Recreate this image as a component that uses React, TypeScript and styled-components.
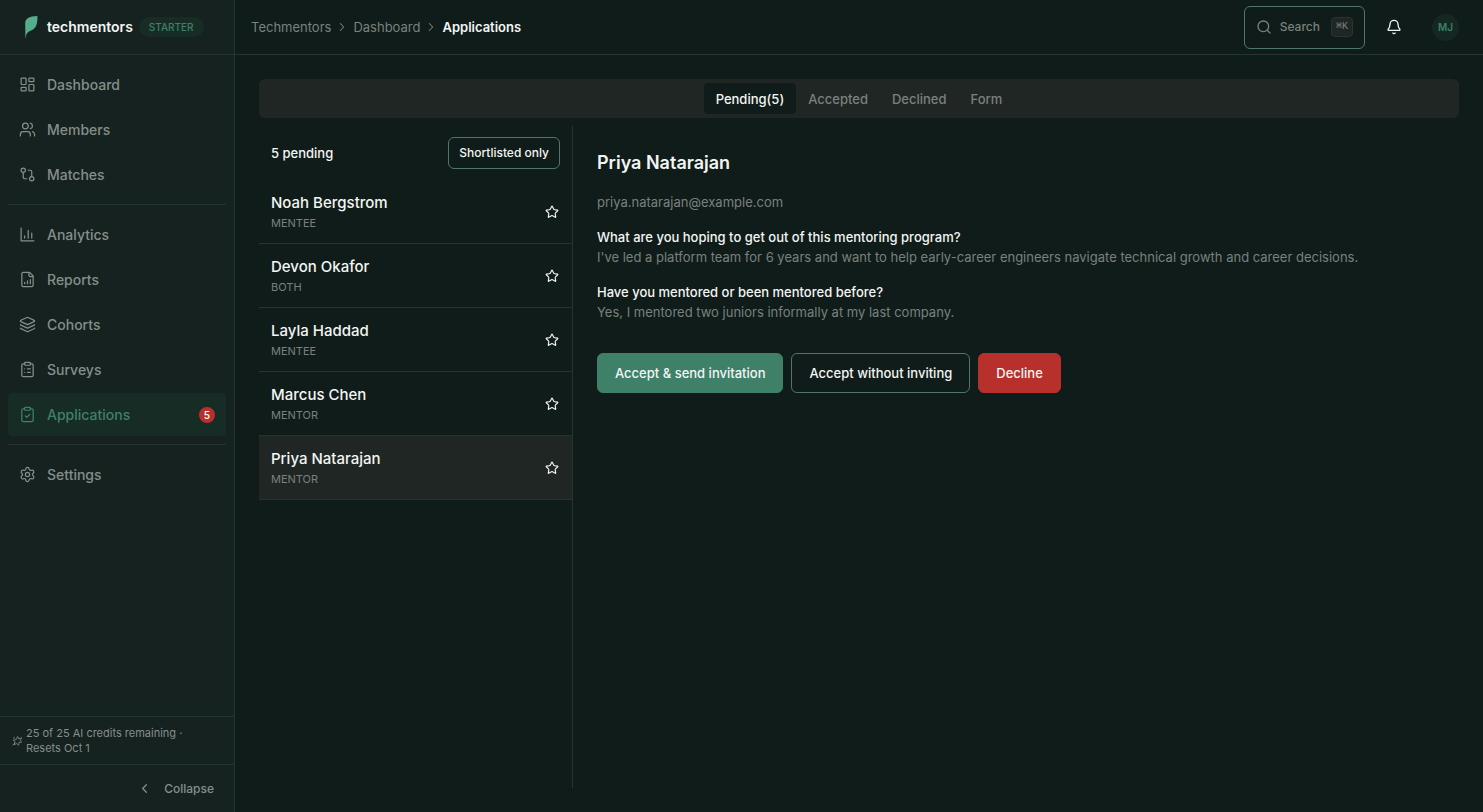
import React, { useState } from "react";
import styled, { createGlobalStyle, css } from "styled-components";
import {
  LayoutDashboard, Users, GitCompare, Layers, ClipboardList,
  ClipboardCheck, Settings, ChevronRight, ChevronLeft, Search, Bell, Star,
} from "lucide-react";

const c = {
  page: "#101c19",
  side: "#15221f",
  line: "#243430",
  text: "#f3f5f4",
  muted: "#868e8b",
  dim: "#79817e",
  green: "#3f8069",
  greenBg: "#172c25",
  outline: "#4f7768",
  panel: "#202624",
  red: "#b8302b",
};

const GlobalStyle = createGlobalStyle`
  * { box-sizing: border-box; }
  body { margin: 0; background: ${c.page}; color: ${c.text}; font-family: Inter, "Liberation Sans", sans-serif; font-size: 13px; line-height: 20px; }
  button { font: inherit; color: inherit; background: none; border: 0; padding: 0; cursor: pointer; }
  a { color: inherit; text-decoration: none; }
  svg { flex-shrink: 0; }
  h1, p, ul, ol, dl, dd { margin: 0; padding: 0; list-style: none; }
`;

const Shell = styled.div`
  display: grid;
  grid-template-columns: 235px minmax(0, 1fr);
  min-height: 100vh;
`;

const Sidebar = styled.aside`
  display: flex;
  flex-direction: column;
  background: ${c.side};
  border-right: 1px solid ${c.line};
`;

const Brand = styled.div`
  display: flex;
  align-items: center;
  height: 55px;
  padding: 0 24px;
  border-bottom: 1px solid ${c.line};
`;

const BrandName = styled.span`
  margin-left: 9px;
  font-size: 14px;
  font-weight: 600;
`;

const Plan = styled.span`
  margin-left: 6px;
  padding: 0 10px;
  border-radius: 10px;
  background: ${c.greenBg};
  color: ${c.green};
  font-size: 10px;
  font-weight: 500;
`;

const Nav = styled.nav`
  flex: 1;
  padding: 8px 8px 0;
`;

const NavGroup = styled.ul`
  display: flex;
  flex-direction: column;
  gap: 2px;
  & + & {
    margin-top: 8px;
    padding-top: 8px;
    border-top: 1px solid ${c.line};
  }
`;

const NavLink = styled.a<{ $active?: boolean }>`
  display: flex;
  align-items: center;
  gap: 11px;
  height: 43px;
  padding: 0 11px;
  border-radius: 4px;
  font-size: 14px;
  font-weight: 500;
  color: ${(p) => (p.$active ? c.green : c.muted)};
  background: ${(p) => (p.$active ? c.greenBg : "transparent")};
`;

const Count = styled.span`
  width: 16px;
  margin-left: auto;
  border-radius: 8px;
  background: ${c.red};
  color: ${c.text};
  font-size: 10px;
  font-weight: 600;
  line-height: 16px;
  text-align: center;
`;

const Credits = styled.p`
  display: flex;
  align-items: center;
  gap: 4px;
  min-height: 48px;
  padding: 0 40px 0 12px;
  border-top: 1px solid ${c.line};
  color: ${c.muted};
  font-size: 11px;
  line-height: 15px;
`;

const Collapse = styled.button`
  display: flex;
  align-items: center;
  justify-content: flex-end;
  gap: 12px;
  height: 48px;
  padding: 0 20px;
  border-top: 1px solid ${c.line};
  color: ${c.muted};
  font-size: 12px;
  font-weight: 500;
`;

const Main = styled.div`
  display: flex;
  flex-direction: column;
`;

const TopBar = styled.header`
  display: flex;
  align-items: center;
  justify-content: space-between;
  height: 55px;
  padding: 0 24px 0 16px;
  border-bottom: 1px solid ${c.line};
`;

const Crumbs = styled.ol`
  display: flex;
  align-items: center;
  color: ${c.dim};
  li { display: flex; align-items: center; }
  svg { margin: 0 4px; }
  [aria-current] { color: ${c.text}; font-weight: 600; }
`;

const Tools = styled.div`
  display: flex;
  align-items: center;
`;

const SearchButton = styled.button`
  display: flex;
  align-items: center;
  height: 43px;
  padding: 0 11px;
  border: 1px solid ${c.outline};
  border-radius: 6px;
  color: ${c.dim};
  font-size: 12px;
  font-weight: 500;
  svg { margin-right: 8px; }
`;

const Key = styled.kbd`
  margin-left: 11px;
  padding: 0 4px;
  border: 1px solid #2b3230;
  border-radius: 4px;
  background: ${c.panel};
  font: 500 10px/18px "Liberation Mono", monospace;
`;

const BellButton = styled.button`
  display: flex;
  margin: 0 30px 0 21px;
`;

const Avatar = styled.button`
  width: 27px;
  height: 27px;
  border-radius: 50%;
  background: #152722;
  color: ${c.green};
  font-size: 10px;
  font-weight: 600;
`;

const Content = styled.main`
  display: flex;
  flex: 1;
  flex-direction: column;
  gap: 8px;
  padding: 24px;
`;

const Tabs = styled.div`
  display: flex;
  justify-content: center;
  height: 39px;
  padding: 4px;
  border-radius: 6px;
  background: ${c.panel};
`;

const Tab = styled.button<{ $active?: boolean }>`
  padding: 0 12px;
  border-radius: 4px;
  font-weight: 500;
  color: ${(p) => (p.$active ? c.text : c.dim)};
  background: ${(p) => (p.$active ? c.page : "transparent")};
`;

const Split = styled.div`
  display: grid;
  flex: 1;
  grid-template-columns: 314px minmax(0, 1fr);
`;

const ListPane = styled.section`
  border-right: 1px solid ${c.line};
`;

const ListHead = styled.div`
  display: flex;
  align-items: center;
  justify-content: space-between;
  height: 54px;
  padding: 0 12px;
  font-weight: 500;
`;

const Button = styled.button<{ $kind?: "primary" | "danger"; $small?: boolean }>`
  height: 40px;
  padding: 0 17px;
  border: 1px solid ${c.outline};
  border-radius: 6px;
  font-weight: 500;
  ${(p) => p.$small && css`height: 32px; padding: 0 10px; font-size: 12px;`}
  ${(p) => p.$kind === "primary" && css`background: ${c.green}; border-color: ${c.green};`}
  ${(p) => p.$kind === "danger" && css`background: ${c.red}; border-color: ${c.red};`}
`;

const Row = styled.li<{ $active?: boolean }>`
  display: flex;
  align-items: center;
  justify-content: space-between;
  height: 64px;
  padding: 0 13px 0 12px;
  border-bottom: 1px solid ${c.line};
  background: ${(p) => (p.$active ? c.panel : "transparent")};
`;

const Person = styled.button`
  display: flex;
  flex: 1;
  flex-direction: column;
  text-align: left;
`;

const PersonName = styled.span`
  font-size: 15px;
  font-weight: 500;
  line-height: 22px;
`;

const Role = styled.span`
  color: ${c.dim};
  font-size: 11px;
  line-height: 18px;
`;

const StarButton = styled.button`
  display: flex;
`;

const Detail = styled.section`
  padding: 24px 0 0 24px;
`;

const Title = styled.h1`
  font-size: 18px;
  font-weight: 600;
  line-height: 26px;
`;

const Email = styled.p`
  margin-top: 16px;
  color: ${c.dim};
`;

const Answers = styled.dl`
  dt { margin-top: 15px; font-weight: 500; }
  dd { color: ${c.dim}; }
`;

const Actions = styled.div`
  display: flex;
  gap: 8px;
  margin-top: 31px;
`;

const Logo = () => (
  <svg width="14" height="24" viewBox="0 0 14 24" aria-hidden="true">
    <path d="M1.400 22.800 1.200 8.800C1.300 3.500 4.800 1.300 13.400 1.100C13.700 8.800 12.200 12.600 8.600 14.700C4.600 16.600 2.200 17.200 1.800 22.800Z" fill="#55ad8e" />
  </svg>
);

const line = { fill: "none", stroke: "currentColor", strokeWidth: 2, strokeLinecap: "round", strokeLinejoin: "round" } as const;

const AnalyticsIcon = () => (
  <svg width="17" height="17" viewBox="0 0 24 24" {...line} strokeWidth={1.75} aria-hidden="true">
    <path d="M3 3v18h18M8 17v-3M13 17V6M18 17v-7" />
  </svg>
);

const ReportsIcon = () => (
  <svg width="17" height="17" viewBox="0 0 24 24" {...line} strokeWidth={1.75} aria-hidden="true">
    <path d="M15 2H6a2 2 0 0 0-2 2v16a2 2 0 0 0 2 2h12a2 2 0 0 0 2-2V7zM14 2v4a2 2 0 0 0 2 2h4M8 18v-2M12 18v-4M16 18v-6" />
  </svg>
);

const SparkIcon = () => (
  <svg width="10" height="10" viewBox="0 0 24 24" {...line} aria-hidden="true">
    <path d="M14 2l2 5 7-3-3 7 3 4-6 0-1 7-5-4-6 3 2-7-4-4 6-1z" />
    <path d="M2 22l5-5M5 3v3" />
  </svg>
);

const groups = [
  [
    { label: "Dashboard", Icon: LayoutDashboard },
    { label: "Members", Icon: Users },
    { label: "Matches", Icon: GitCompare },
  ],
  [
    { label: "Analytics", Icon: AnalyticsIcon },
    { label: "Reports", Icon: ReportsIcon },
    { label: "Cohorts", Icon: Layers },
    { label: "Surveys", Icon: ClipboardList },
    { label: "Applications", Icon: ClipboardCheck, count: 5 },
  ],
  [{ label: "Settings", Icon: Settings }],
] as { label: string; Icon: React.ComponentType<{ size?: number; strokeWidth?: number }>; count?: number }[][];

const people = [
  { name: "Noah Bergstrom", role: "MENTEE" },
  { name: "Devon Okafor", role: "BOTH" },
  { name: "Layla Haddad", role: "MENTEE" },
  { name: "Marcus Chen", role: "MENTOR" },
  { name: "Priya Natarajan", role: "MENTOR" },
];

export default function App() {
  const [tab, setTab] = useState("Pending(5)");
  const [selected, setSelected] = useState(4);
  return (
    <Shell>
      <GlobalStyle />
      <Sidebar>
        <Brand>
          <Logo />
          <BrandName>techmentors</BrandName>
          <Plan>STARTER</Plan>
        </Brand>
        <Nav aria-label="Main">
          {groups.map((items) => (
            <NavGroup key={items[0].label}>
              {items.map(({ label, Icon, count }) => (
                <li key={label}>
                  <NavLink href="#" $active={label === "Applications"}>
                    <Icon size={17} strokeWidth={1.75} />
                    {label}
                    {count && <Count>{count}</Count>}
                  </NavLink>
                </li>
              ))}
            </NavGroup>
          ))}
        </Nav>
        <Credits>
          <SparkIcon />
          <span>25 of 25 AI credits remaining · Resets Oct 1</span>
        </Credits>
        <Collapse><ChevronLeft size={15} />Collapse</Collapse>
      </Sidebar>
      <Main>
        <TopBar>
          <nav aria-label="Breadcrumb">
            <Crumbs>
              <li><a href="#">Techmentors</a><ChevronRight size={14} strokeWidth={1.75} /></li>
              <li><a href="#">Dashboard</a><ChevronRight size={14} strokeWidth={1.75} /></li>
              <li aria-current="page">Applications</li>
            </Crumbs>
          </nav>
          <Tools>
            <SearchButton><Search size={16} />Search<Key>⌘K</Key></SearchButton>
            <BellButton aria-label="Notifications"><Bell size={16} /></BellButton>
            <Avatar>MJ</Avatar>
          </Tools>
        </TopBar>
        <Content>
          <Tabs role="tablist">
            {["Pending(5)", "Accepted", "Declined", "Form"].map((t) => (
              <Tab key={t} role="tab" aria-selected={t === tab} $active={t === tab} onClick={() => setTab(t)}>{t}</Tab>
            ))}
          </Tabs>
          <Split>
            <ListPane>
              <ListHead>
                5 pending
                <Button $small>Shortlisted only</Button>
              </ListHead>
              <ul>
                {people.map((p, i) => (
                  <Row key={p.name} $active={i === selected}>
                    <Person onClick={() => setSelected(i)}>
                      <PersonName>{p.name}</PersonName>
                      <Role>{p.role}</Role>
                    </Person>
                    <StarButton aria-label={`Shortlist ${p.name}`}><Star size={14} /></StarButton>
                  </Row>
                ))}
              </ul>
            </ListPane>
            <Detail>
              <Title>Priya Natarajan</Title>
              <Email>priya.natarajan@example.com</Email>
              <Answers>
                <dt>What are you hoping to get out of this mentoring program?</dt>
                <dd>I've led a platform team for 6 years and want to help early-career engineers navigate technical growth and career decisions.</dd>
                <dt>Have you mentored or been mentored before?</dt>
                <dd>Yes, I mentored two juniors informally at my last company.</dd>
              </Answers>
              <Actions>
                <Button $kind="primary">Accept &amp; send invitation</Button>
                <Button>Accept without inviting</Button>
                <Button $kind="danger">Decline</Button>
              </Actions>
            </Detail>
          </Split>
        </Content>
      </Main>
    </Shell>
  );
}
